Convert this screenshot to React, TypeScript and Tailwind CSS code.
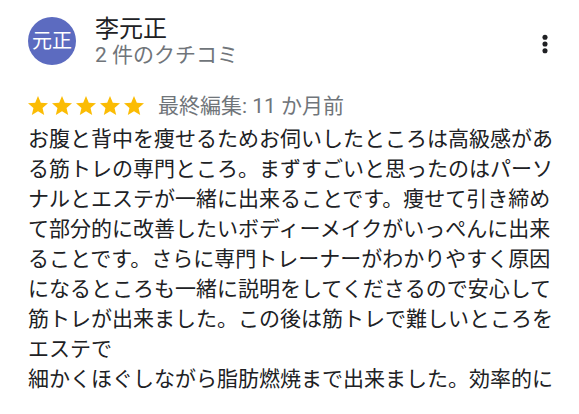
import React from 'react';

const body = `お腹と背中を痩せるためお伺いしたところは高級感がある筋トレの専門ところ。まずすごいと思ったのはパーソナルとエステが一緒に出来ることです。痩せて引き締めて部分的に改善したいボディーメイクがいっぺんに出来ることです。さらに専門トレーナーがわかりやすく原因になるところも一緒に説明をしてくださるので安心して筋トレが出来ました。この後は筋トレで難しいところをエステで
細かくほぐしながら脂肪燃焼まで出来ました。効率的に`;

const Star = () => (
  <svg viewBox="0 0 24 24" className="w-[24px] h-[24px] shrink-0">
    <path
      fill="#fbbc04"
      d="M12 17.27L18.18 21l-1.64-7.03L22 9.24l-7.19-.61L12 2 9.19 8.63 2 9.24l5.46 4.73L5.82 21z"
    />
  </svg>
);

export default function App() {
  return (
    <div className="w-[579px] h-[414px] overflow-hidden bg-white font-['Roboto','Noto_Sans_CJK_JP',sans-serif]">
      {/* Header */}
      <div className="flex items-start pl-[28px] pr-[16px] pt-[17px]">
        <div className="w-[48px] h-[48px] rounded-full bg-[#5c6bc0] flex items-center justify-center text-white text-[20px] leading-none shrink-0">
          元正
        </div>
        <div className="ml-[19px] flex flex-col -mt-[2px]">
          <div className="text-[24px] leading-[28px] text-[#202124]">李元正</div>
          <div className="text-[21px] leading-[24px] text-[#70757a]">2 件のクチコミ</div>
        </div>
        <svg viewBox="0 0 24 24" className="ml-auto mt-[9px] w-[36px] h-[36px]">
          <circle cx="12" cy="7.5" r="1.7" fill="#202124" />
          <circle cx="12" cy="12" r="1.7" fill="#202124" />
          <circle cx="12" cy="16.5" r="1.7" fill="#202124" />
        </svg>
      </div>

      {/* Rating */}
      <div className="flex items-center pl-[26px] mt-[27px]">
        <div className="flex">
          <Star />
          <Star />
          <Star />
          <Star />
          <Star />
        </div>
        <span className="ml-[12px] text-[21px] leading-[24px] text-[#70757a]">最終編集: 11 か月前</span>
      </div>

      {/* Review text */}
      <p className="ml-[28px] mt-[6px] w-[530px] text-[21px] leading-[30px] text-[#202124] whitespace-pre-line">
        {body}
      </p>
    </div>
  );
}
